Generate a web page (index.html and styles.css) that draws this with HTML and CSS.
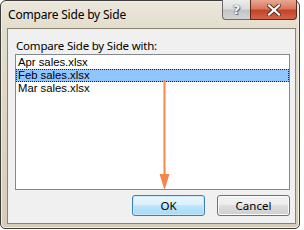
FILE: index.html
```html
<!DOCTYPE html>
<html>
<head>
<meta charset="utf-8">
<link rel="stylesheet" href="styles.css">
</head>
<body>
<div class="window">
  <div class="titlebar">
    <div class="title">Compare Side by Side</div>
    <div class="caption-buttons">
      <div class="cap-btn help">?</div>
      <div class="cap-btn close">
        <svg width="14" height="12" viewBox="0 0 14 12">
          <path d="M2 1.5 L12 10.5 M12 1.5 L2 10.5" stroke="#5a2a1e" stroke-width="4" stroke-linecap="square"/>
          <path d="M2 1.5 L12 10.5 M12 1.5 L2 10.5" stroke="#ffffff" stroke-width="2.2" stroke-linecap="square"/>
        </svg>
      </div>
    </div>
  </div>
  <div class="client">
    <div class="label">Compare Side by Side with:</div>
    <div class="listbox">
      <div class="item">Apr sales.xlsx</div>
      <div class="item selected">Feb sales.xlsx</div>
      <div class="item">Mar sales.xlsx</div>
    </div>
    <div class="buttons">
      <div class="btn default">OK</div>
      <div class="btn">Cancel</div>
    </div>
  </div>
  <svg class="arrow" width="304" height="230" viewBox="0 0 304 230">
    <line x1="164.5" y1="80" x2="164.5" y2="180" stroke="#f4874b" stroke-width="2"/>
    <polygon points="159.5,174 169.5,174 164.5,190" fill="#f4874b"/>
  </svg>
</div>
</body>
</html>
```

FILE: styles.css
```css
html, body {
  margin: 0;
  padding: 0;
  background: #ffffff;
}
body {
  width: 304px;
  height: 230px;
  overflow: hidden;
  font-family: "Noto Sans", "Open Sans", sans-serif;
  font-size: 11.5px;
  color: #000;
}
.window {
  position: relative;
  box-sizing: border-box;
  width: 300px;
  height: 229px;
  border: 1px solid #3d3d3d;
  border-radius: 6px 6px 5px 5px;
  background: linear-gradient(to bottom, #ebe7db 0px, #e2dccb 30px, #d6cdb6 100%);
  display: flex;
  flex-direction: column;
  box-shadow: inset 0 0 0 1px #f3efe4;
}
.titlebar {
  height: 27px;
  display: flex;
  justify-content: space-between;
  align-items: flex-start;
}
.title {
  padding: 5px 0 0 7px;
  font-size: 12px;
  letter-spacing: -0.2px;
  color: #000;
}
.caption-buttons {
  display: flex;
  margin-right: 2px;
  margin-top: -1px;
}
.cap-btn {
  box-sizing: border-box;
  height: 20px;
  border: 1px solid #6b6b6b;
  border-top: none;
  display: flex;
  align-items: center;
  justify-content: center;
}
.help {
  width: 28px;
  border-radius: 0 0 0 4px;
  border-right: none;
  background: linear-gradient(to bottom, #ececec 0%, #dcdcdc 45%, #c4c4c4 55%, #d4d4d4 100%);
  font-family: "DejaVu Sans", sans-serif;
  font-weight: bold;
  font-size: 13px;
  color: #f8f8f8;
  text-shadow: 0 0 1px #555, 0 0 1px #555, 1px 1px 0 #777;
}
.close {
  width: 47px;
  border-radius: 0 0 4px 0;
  border-color: #5c2a1f;
  background: linear-gradient(to bottom, #e9a791 0%, #d9785e 45%, #c5432a 55%, #d2634a 100%);
}
.close svg {
  display: block;
}
.client {
  flex: 1;
  margin: 0 3px 4px 6px;
  border: 1px solid #8b8470;
  background: #f0f0f0;
  display: flex;
  flex-direction: column;
  padding: 0 4px 0 7px;
}
.label {
  height: 15px;
  margin-top: 9px;
  line-height: 15px;
  padding-left: 1px;
  letter-spacing: -0.2px;
}
.listbox {
  box-sizing: border-box;
  margin-top: 1px;
  height: 136px;
  width: 275px;
  border: 1px solid #828790;
  background: #ffffff;
  padding-top: 1px;
}
.item {
  box-sizing: border-box;
  height: 13px;
  line-height: 13px;
  padding-left: 2px;
  font-family: "Liberation Sans", Arial, sans-serif;
  font-size: 11.3px;
  overflow: hidden;
}
.item.selected {
  background: #91c5ff;
  outline: 1px dotted #222;
  outline-offset: -1px;
}
.buttons {
  display: flex;
  justify-content: flex-end;
  gap: 12px;
  margin-top: 5px;
  width: 275px;
}
.btn {
  box-sizing: border-box;
  width: 73px;
  height: 21px;
  border: 1px solid #707070;
  border-radius: 3px;
  background: linear-gradient(to bottom, #f2f2f2 0%, #ebebeb 50%, #dddddd 50%, #cfcfcf 100%);
  box-shadow: inset 0 0 0 1px #fcfcfc;
  display: flex;
  align-items: center;
  justify-content: center;
  font-size: 11.5px;
}
.btn.default {
  border-color: #3c7fb1;
  background: linear-gradient(to bottom, #eaf6fd 0%, #d9f0fc 50%, #bee6fd 50%, #a7d9f5 100%);
  box-shadow: inset 0 0 0 1px #c9e9fb;
}
.arrow {
  position: absolute;
  left: -1px;
  top: -1px;
  pointer-events: none;
}
```
